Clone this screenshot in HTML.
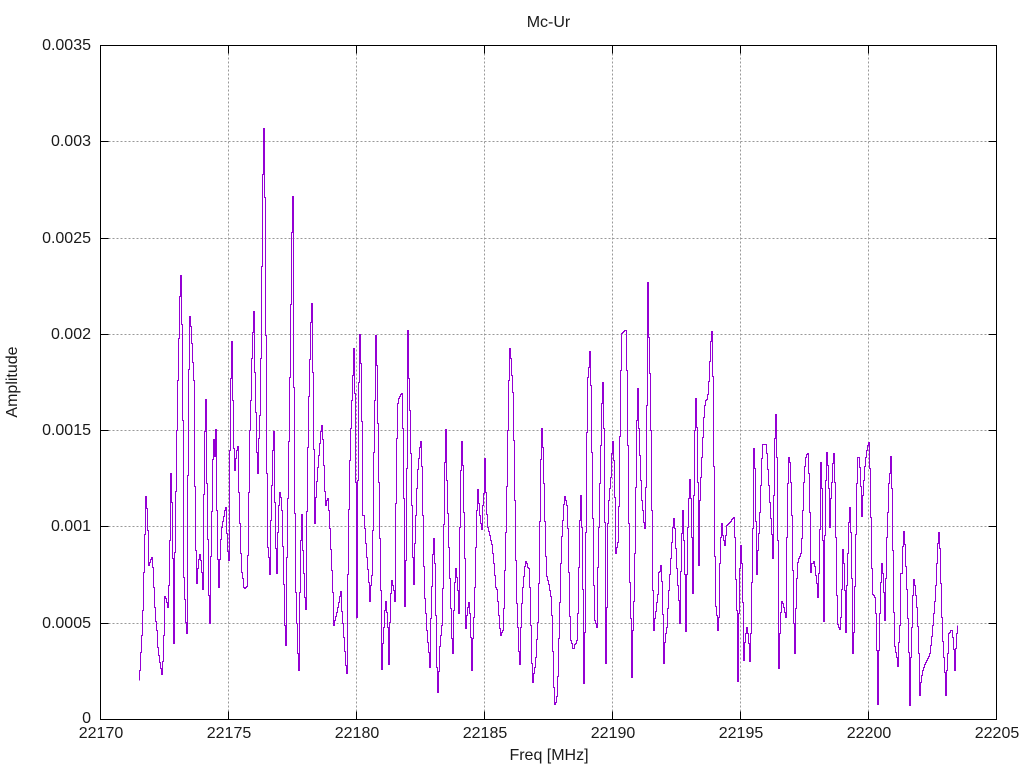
<!DOCTYPE html>
<html><head><meta charset="utf-8"><title>Mc-Ur</title>
<style>html,body{margin:0;padding:0;background:#fff}svg{display:block}text{font-family:"Liberation Sans",sans-serif;font-size:16px;fill:#1a1a1a}</style>
</head><body>
<svg width="1024" height="768" viewBox="0 0 1024 768" xmlns="http://www.w3.org/2000/svg">
<rect width="1024" height="768" fill="#fff"/>
<g shape-rendering="crispEdges" transform="translate(.5 .5)">
<path d="M108 141H988M108 238H988M108 334H988M108 430H988M108 526H988M108 623H988M228 53V711M356 53V711M484 53V711M612 53V711M740 53V711M868 53V711" fill="none" stroke="#999" stroke-width="1" stroke-dasharray="2 2"/>
<path fill="none" stroke="#9400d3" stroke-width="1" d="M139 680V670h1V652h1V635h1V610h1V572h1V534h1V496h1V508h1V530h1V565h1V562h1V559h1V557h1V567h1V587h1V607h1V621h1V630h1V647h1V655h1V662h1V668h1V674h1V661h1V635h1V596h1V598h1V602h1V607h1V585h1V540h1V473h1V502h1V558h1V643h1V552h1V491h1V430h1V380h1V338h1V296h1V275h1V324h1V420h1V577h1V599h1V622h1V633h1V475h1V369h1V316h1V326h1V343h1V362h1V380h1V486h1V550h1V583h1V568h1V559h1V554h1V560h1V572h1V589h1V494h1V431h1V399h1V483h1V539h1V595h1V623h1V556h1V511h1V459h1V439h1V456h1V429h1V510h1V559h1V587h1V559h1V539h1V527h1V521h1V516h1V510h1V507h1V533h1V551h1V560h1V450h1V378h1V341h1V400h1V448h1V470h1V458h1V450h1V446h1V492h1V523h1V553h1V572h1V578h1V587h1V588h1V587h1V586h1V555h1V492h1V430h1V400h1V358h1V332h1V311h1V372h1V412h1V452h1V473h1V438h1V415h1V358h1V266h1V174h1V128h1V197h1V335h1V473h1V547h1V557h1V574h1V520h1V485h1V450h1V431h1V502h1V548h1V573h1V532h1V505h1V492h1V497h1V510h1V546h1V584h1V625h1V645h1V557h1V498h1V441h1V377h1V304h1V232h1V196h1V387h1V513h1V592h1V623h1V653h1V670h1V592h1V540h1V514h1V550h1V573h1V597h1V609h1V511h1V447h1V396h1V359h1V322h1V303h1V372h1V449h1V523h1V497h1V481h1V467h1V455h1V443h1V431h1V425h1V439h1V465h1V491h1V505h1V500h1V498h1V510h1V528h1V549h1V570h1V592h1V625h1V620h1V616h1V612h1V607h1V602h1V596h1V591h1V611h1V623h1V637h1V651h1V665h1V673h1V574h1V509h1V460h1V428h1V400h1V375h1V348h1V393h1V482h1V617h1V480h1V382h1V334h1V363h1V421h1V515h1V515h1V528h1V543h1V557h1V569h1V582h1V601h1V585h1V575h1V530h1V452h1V400h1V335h1V365h1V423h1V482h1V538h1V590h1V669h1V643h1V627h1V610h1V601h1V612h1V627h1V664h1V622h1V593h1V580h1V585h1V590h1V601h1V503h1V438h1V403h1V398h1V396h1V394h1V393h1V428h1V498h1V606h1V560h1V468h1V330h1V378h1V410h1V453h1V505h1V557h1V584h1V543h1V515h1V488h1V469h1V458h1V447h1V441h1V466h1V515h1V566h1V598h1V613h1V630h1V642h1V652h1V667h1V618h1V586h1V554h1V538h1V563h1V615h1V667h1V692h1V671h1V646h1V635h1V625h1V588h1V524h1V462h1V429h1V480h1V513h1V547h1V578h1V608h1V638h1V653h1V610h1V582h1V568h1V577h1V590h1V613h1V527h1V470h1V441h1V465h1V512h1V558h1V628h1V615h1V607h1V602h1V613h1V637h1V670h1V638h1V617h1V587h1V547h1V510h1V489h1V503h1V515h1V523h1V529h1V505h1V493h1V458h1V492h1V514h1V527h1V531h1V535h1V540h1V544h1V553h1V563h1V575h1V587h1V589h1V601h1V615h1V628h1V635h1V632h1V630h1V608h1V570h1V532h1V486h1V430h1V380h1V348h1V358h1V375h1V392h1V440h1V500h1V560h1V603h1V627h1V651h1V664h1V627h1V603h1V587h1V576h1V566h1V561h1V563h1V567h1V568h1V587h1V625h1V663h1V682h1V673h1V667h1V657h1V639h1V622h1V583h1V521h1V459h1V428h1V447h1V483h1V521h1V556h1V576h1V580h1V584h1V590h1V596h1V615h1V651h1V687h1V704h1V702h1V696h1V676h1V638h1V602h1V563h1V536h1V520h1V504h1V496h1V500h1V505h1V528h1V572h1V616h1V640h1V643h1V648h1V648h1V644h1V643h1V640h1V613h1V567h1V520h1V495h1V527h1V589h1V683h1V632h1V532h1V432h1V377h1V367h1V351h1V385h1V452h1V518h1V585h1V620h1V623h1V627h1V567h1V527h1V483h1V445h1V403h1V382h1V428h1V522h1V663h1V607h1V523h1V500h1V488h1V477h1V453h1V441h1V460h1V497h1V553h1V547h1V542h1V506h1V436h1V370h1V333h1V332h1V331h1V330h1V330h1V370h1V445h1V523h1V582h1V618h1V677h1V630h1V601h1V553h1V487h1V420h1V388h1V428h1V455h1V480h1V500h1V510h1V522h1V528h1V487h1V405h1V282h1V337h1V373h1V430h1V510h1V590h1V630h1V618h1V611h1V602h1V594h1V572h1V571h1V565h1V581h1V614h1V663h1V642h1V633h1V627h1V608h1V590h1V574h1V558h1V542h1V527h1V518h1V528h1V548h1V568h1V585h1V600h1V623h1V571h1V533h1V510h1V540h1V574h1V631h1V574h1V527h1V498h1V479h1V498h1V537h1V593h1V495h1V430h1V398h1V427h1V482h1V565h1V500h1V477h1V457h1V437h1V417h1V405h1V400h1V399h1V394h1V381h1V361h1V341h1V331h1V376h1V466h1V556h1V606h1V615h1V630h1V617h1V563h1V537h1V523h1V535h1V540h1V545h1V535h1V525h1V524h1V523h1V522h1V521h1V519h1V518h1V517h1V537h1V579h1V610h1V681h1V613h1V568h1V545h1V563h1V602h1V660h1V642h1V633h1V627h1V633h1V643h1V661h1V633h1V582h1V528h1V448h1V468h1V521h1V574h1V550h1V533h1V512h1V485h1V458h1V444h1V444h1V444h1V444h1V453h1V469h1V485h1V502h1V518h1V534h1V558h1V495h1V438h1V414h1V457h1V540h1V668h1V633h1V612h1V601h1V603h1V607h1V612h1V617h1V537h1V483h1V457h1V462h1V482h1V515h1V570h1V623h1V653h1V608h1V578h1V562h1V558h1V556h1V553h1V538h1V510h1V482h1V466h1V457h1V454h1V453h1V473h1V512h1V572h1V563h1V563h1V561h1V566h1V575h1V583h1V597h1V573h1V529h1V462h1V488h1V540h1V621h1V535h1V480h1V452h1V465h1V488h1V527h1V498h1V482h1V463h1V453h1V482h1V537h1V595h1V624h1V627h1V629h1V617h1V589h1V549h1V563h1V590h1V632h1V585h1V553h1V522h1V507h1V532h1V578h1V653h1V632h1V586h1V534h1V483h1V457h1V457h1V467h1V486h1V516h1V495h1V480h1V466h1V457h1V450h1V445h1V442h1V468h1V517h1V568h1V594h1V595h1V597h1V613h1V650h1V704h1V650h1V613h1V582h1V563h1V573h1V592h1V620h1V578h1V537h1V512h1V483h1V473h1V456h1V488h1V550h1V612h1V646h1V652h1V657h1V666h1V642h1V625h1V573h1V573h1V546h1V531h1V544h1V566h1V589h1V618h1V652h1V705h1V657h1V627h1V595h1V579h1V585h1V595h1V607h1V626h1V653h1V695h1V682h1V675h1V670h1V667h1V664h1V662h1V660h1V658h1V656h1V653h1V645h1V636h1V625h1V613h1V601h1V585h1V563h1V543h1V532h1V548h1V583h1V617h1V641h1V657h1V672h1V695h1V670h1V653h1V633h1V632h1V630h1V630h1V637h1V649h1V670h1V648h1V633h1V625"/>
<rect x="100" y="45" width="896" height="674" fill="none" stroke="#000" stroke-width="1"/>
<path d="M100 141h8M100 238h8M100 334h8M100 430h8M100 526h8M100 623h8M996 141h-8M996 238h-8M996 334h-8M996 430h-8M996 526h-8M996 623h-8M228 45v8M356 45v8M484 45v8M612 45v8M740 45v8M868 45v8M228 719v-8M356 719v-8M484 719v-8M612 719v-8M740 719v-8M868 719v-8" fill="none" stroke="#000" stroke-width="1"/>
</g>
<g text-anchor="end">
<text x="91" y="50">0.0035</text>
<text x="91" y="146">0.003</text>
<text x="91" y="243">0.0025</text>
<text x="91" y="339">0.002</text>
<text x="91" y="435">0.0015</text>
<text x="91" y="531">0.001</text>
<text x="91" y="628">0.0005</text>
<text x="91" y="723">0</text>
</g>
<g text-anchor="middle">
<text x="101" y="738">22170</text>
<text x="229" y="738">22175</text>
<text x="357" y="738">22180</text>
<text x="485" y="738">22185</text>
<text x="613" y="738">22190</text>
<text x="741" y="738">22195</text>
<text x="869" y="738">22200</text>
<text x="997" y="738">22205</text>
<text x="549" y="760">Freq [MHz]</text>
<text x="548.5" y="27">Mc-Ur</text>
<text transform="translate(17 382) rotate(-90)">Amplitude</text>
</g>
</svg>
</body></html>
